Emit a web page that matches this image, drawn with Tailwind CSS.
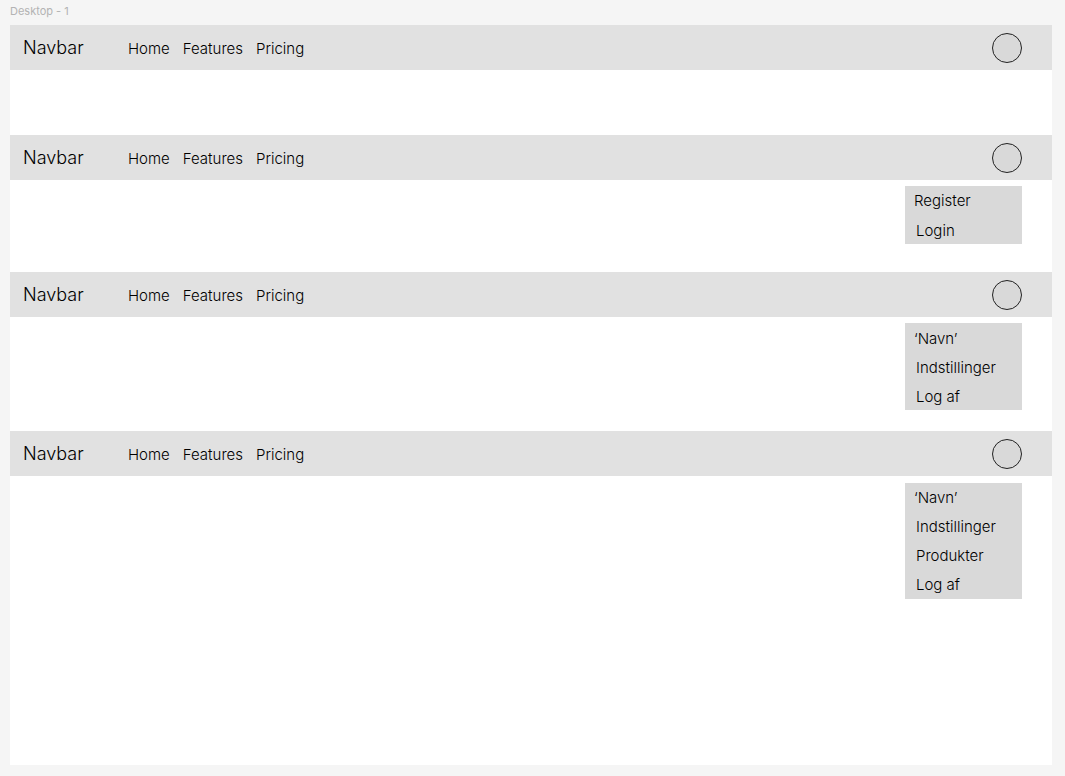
<!DOCTYPE html>
<html lang="da">
<head>
<meta charset="utf-8">
<meta name="viewport" content="width=device-width, initial-scale=1">
<title>Desktop - 1</title>
<script src="https://cdn.jsdelivr.net/npm/@tailwindcss/browser@4"></script>
</head>
<body class="flex min-h-screen flex-col bg-[#f5f5f5] pb-[11px] pl-[10px] pr-[13px] font-[Inter,sans-serif] text-[15px] leading-5 font-light text-black">
<h1 class="pt-[3px] pb-[6px] text-[11px] leading-4 font-normal text-[#b3b3b3]">Desktop - 1</h1>
<main class="flex grow flex-col bg-white">

<section class="min-h-[110px]">
<header class="flex h-[45px] items-center bg-[#e1e1e1] pl-[13px] pr-[30px]">
<a href="#" class="w-[105px] text-[18px] leading-6">Navbar</a>
<nav class="flex grow gap-[13px] pt-[2px]"><a href="#">Home</a><a href="#">Features</a><a href="#">Pricing</a></nav>
<button type="button" aria-label="Profil" class="size-[30px] rounded-full border border-[#222] bg-[#d9d9d9]"></button>
</header>
</section>

<section class="min-h-[137px]">
<header class="flex h-[45px] items-center bg-[#e1e1e1] pl-[13px] pr-[30px]">
<a href="#" class="w-[105px] text-[18px] leading-6">Navbar</a>
<nav class="flex grow gap-[13px] pt-[2px]"><a href="#">Home</a><a href="#">Features</a><a href="#">Pricing</a></nav>
<button type="button" aria-label="Profil" class="size-[30px] rounded-full border border-[#222] bg-[#d9d9d9]"></button>
</header>
<ul class="mt-[6px] mr-[30px] ml-auto flex w-[117px] flex-col gap-[10px] bg-[#d9d9d9] pt-[5px] pb-[3px]">
<li class="pl-[9px]"><a href="#">Register</a></li>
<li class="pl-[11px]"><a href="#">Login</a></li>
</ul>
</section>

<section class="min-h-[159px]">
<header class="flex h-[45px] items-center bg-[#e1e1e1] pl-[13px] pr-[30px]">
<a href="#" class="w-[105px] text-[18px] leading-6">Navbar</a>
<nav class="flex grow gap-[13px] pt-[2px]"><a href="#">Home</a><a href="#">Features</a><a href="#">Pricing</a></nav>
<button type="button" aria-label="Profil" class="size-[30px] rounded-full border border-[#222] bg-[#d9d9d9]"></button>
</header>
<ul class="mt-[6px] mr-[30px] ml-auto flex w-[117px] flex-col gap-[9px] bg-[#d9d9d9] pt-[6px] pb-[3px]">
<li class="pl-[9px]"><a href="#">‘Navn’</a></li>
<li class="pl-[11px]"><a href="#">Indstillinger</a></li>
<li class="pl-[11px]"><a href="#">Log af</a></li>
</ul>
</section>

<section>
<header class="flex h-[45px] items-center bg-[#e1e1e1] pl-[13px] pr-[30px]">
<a href="#" class="w-[105px] text-[18px] leading-6">Navbar</a>
<nav class="flex grow gap-[13px] pt-[2px]"><a href="#">Home</a><a href="#">Features</a><a href="#">Pricing</a></nav>
<button type="button" aria-label="Profil" class="size-[30px] rounded-full border border-[#222] bg-[#d9d9d9]"></button>
</header>
<ul class="mt-[7px] mr-[30px] ml-auto flex w-[117px] flex-col gap-[9px] bg-[#d9d9d9] pt-[5px] pb-[4px]">
<li class="pl-[9px]"><a href="#">‘Navn’</a></li>
<li class="pl-[11px]"><a href="#">Indstillinger</a></li>
<li class="pl-[11px]"><a href="#">Produkter</a></li>
<li class="pl-[11px]"><a href="#">Log af</a></li>
</ul>
</section>
</main>
</body>
</html>
